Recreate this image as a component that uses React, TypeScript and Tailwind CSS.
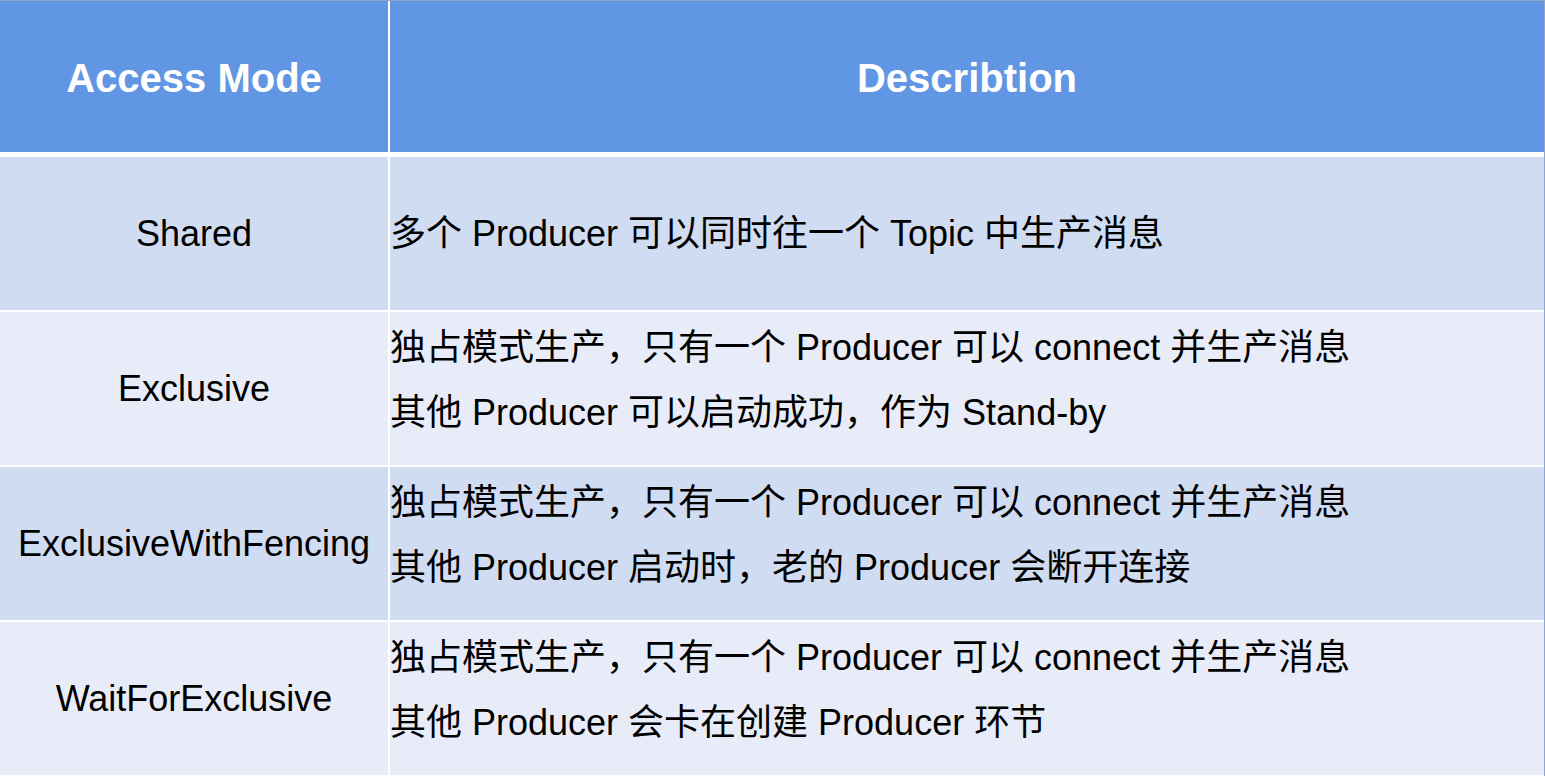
import React from 'react';

type Row = {
  mode: string;
  lines: string[];
  bg: string;
};

const rows: Row[] = [
  { mode: 'Shared', lines: ['多个 Producer 可以同时往一个 Topic 中生产消息'], bg: 'bg-[#d0dcf2]' },
  {
    mode: 'Exclusive',
    lines: ['独占模式生产，只有一个 Producer 可以 connect 并生产消息', '其他 Producer 可以启动成功，作为 Stand-by'],
    bg: 'bg-[#e8ecf8]',
  },
  {
    mode: 'ExclusiveWithFencing',
    lines: ['独占模式生产，只有一个 Producer 可以 connect 并生产消息', '其他 Producer 启动时，老的 Producer 会断开连接'],
    bg: 'bg-[#d0dcf2]',
  },
  {
    mode: 'WaitForExclusive',
    lines: ['独占模式生产，只有一个 Producer 可以 connect 并生产消息', '其他 Producer 会卡在创建 Producer 环节'],
    bg: 'bg-[#e8ecf8]',
  },
];

export default function App() {
  return (
    <div
      className="w-[1545px] h-[776px] bg-white flex flex-col overflow-hidden border-t border-r border-[#8fa6cc] text-black"
      style={{ fontFamily: '"Liberation Sans", "Noto Sans CJK SC", sans-serif' }}
    >
      <div className="flex gap-[2px] h-[151px] shrink-0">
        <div className="w-[388px] shrink-0 bg-[#6096e3] flex items-center justify-center text-white font-bold text-[40px] pt-[2px]">
          Access Mode
        </div>
        <div className="flex-1 bg-[#6096e3] flex items-center justify-center text-white font-bold text-[40px] pt-[2px]">
          Describtion
        </div>
      </div>

      <div className="flex flex-col gap-[2px] mt-[5px] flex-1">
        {rows.map((row) => (
          <div key={row.mode} className="flex gap-[2px] h-[153px] shrink-0">
            <div className={`w-[388px] shrink-0 ${row.bg} flex items-center justify-center text-[36px]`}>
              {row.mode}
            </div>
            <div className={`flex-1 ${row.bg} flex items-center`}>
              <div className={`text-[36px] leading-[65px] ${row.lines.length > 1 ? 'mb-[18px]' : ''}`}>
                {row.lines.map((line) => (
                  <div key={line}>{line}</div>
                ))}
              </div>
            </div>
          </div>
        ))}
      </div>
    </div>
  );
}
